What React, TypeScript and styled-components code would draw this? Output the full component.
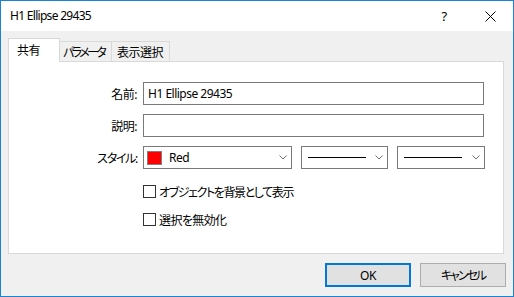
import React from 'react';
import styled, { createGlobalStyle } from 'styled-components';

const GlobalStyle = createGlobalStyle`
  html, body {
    margin: 0;
    padding: 0;
    background: #ffffff;
  }
  * {
    box-sizing: border-box;
  }
`;

const Window = styled.div`
  width: 514px;
  height: 297px;
  border: 1px solid #1883d7;
  background: #f0f0f0;
  display: flex;
  flex-direction: column;
  font-family: 'Noto Sans', 'Noto Sans CJK JP', sans-serif;
  font-size: 12px;
  letter-spacing: -0.5px;
  color: #000000;
  font-feature-settings: 'palt';
`;

// kana in the reference font is much narrower than in Noto Sans CJK
const Squeeze = styled.span<{ $ls: number }>`
  letter-spacing: ${({ $ls }) => $ls}px;
  white-space: nowrap;
`;

const TitleBar = styled.div`
  height: 30px;
  background: #ffffff;
  display: flex;
  align-items: center;
  padding-left: 9px;
`;

const Title = styled.span`
  font-size: 12px;
  line-height: 16px;
  letter-spacing: -0.7px;
`;

const TitleButtons = styled.div`
  margin-left: auto;
  display: flex;
  height: 100%;
`;

const TitleButton = styled.div`
  width: 46px;
  height: 100%;
  display: flex;
  align-items: center;
  justify-content: center;
  font-size: 13px;
`;

const Body = styled.div`
  flex: 1;
  display: flex;
  flex-direction: column;
  padding: 7px 9px 9px 7px;
`;

const TabStrip = styled.div`
  height: 24px;
  margin-bottom: -1px;
  display: flex;
  align-items: flex-end;
  position: relative;
  z-index: 1;
`;

const Tab = styled.div<{ $active?: boolean; $width: number; $pad: number }>`
  width: ${({ $width }) => $width}px;
  height: ${({ $active }) => ($active ? 24 : 21)}px;
  padding-left: ${({ $pad }) => $pad}px;
  margin-left: -1px;
  border: 1px solid #d9d9d9;
  border-bottom: ${({ $active }) => ($active ? 'none' : '1px solid #d9d9d9')};
  background: ${({ $active }) => ($active ? '#ffffff' : '#f0f0f0')};
  display: flex;
  align-items: center;
  white-space: nowrap;
  overflow: hidden;
  position: relative;
  z-index: ${({ $active }) => ($active ? 2 : 1)};
  padding-bottom: ${({ $active }) => ($active ? 1 : 0)}px;

  &:first-child {
    margin-left: 0;
  }
`;

const Panel = styled.div`
  height: 193px;
  background: #ffffff;
  border: 1px solid #d9d9d9;
  padding-top: 20px;
`;

const FormGrid = styled.div`
  display: grid;
  grid-template-columns: 128px 342px;
  column-gap: 6px;
  row-gap: 9px;
  align-items: center;
`;

const Label = styled.label`
  text-align: right;
  white-space: nowrap;
`;

const TextInput = styled.div`
  width: 341px;
  height: 23px;
  border: 1px solid #7a7a7a;
  background: #ffffff;
  display: flex;
  align-items: center;
  padding-left: 4px;
`;

const StyleRow = styled.div`
  display: flex;
  gap: 9px;
`;

const Combo = styled.div<{ $width: number }>`
  width: ${({ $width }) => $width}px;
  height: 23px;
  border: 1px solid #7a7a7a;
  background: #ffffff;
  display: flex;
  align-items: center;
  padding: 0 4px 0 3px;
`;

const Swatch = styled.span<{ $color: string }>`
  width: 15px;
  height: 14px;
  background: ${({ $color }) => $color};
  border: 1px solid #808080;
  margin-right: 7px;
`;

const LineSample = styled.span`
  width: 58px;
  height: 1px;
  background: #000000;
  margin-left: 3px;
`;

const Chevron = styled.svg`
  margin-left: auto;
  flex: none;
`;

const CheckList = styled.div`
  grid-column: 2;
  display: flex;
  flex-direction: column;
  gap: 11px;
  margin-top: 5px;
`;

const CheckRow = styled.div`
  height: 17px;
  display: flex;
  align-items: center;
  gap: 3px;
  white-space: nowrap;
`;

const CheckBox = styled.span`
  width: 13px;
  height: 13px;
  border: 1px solid #333333;
  background: #ffffff;
`;

const ButtonRow = styled.div`
  margin-top: 9px;
  margin-right: -2px;
  display: flex;
  justify-content: flex-end;
  gap: 9px;
`;

const Button = styled.div<{ $default?: boolean }>`
  width: 86px;
  height: 24px;
  background: #e1e1e1;
  border: ${({ $default }) => ($default ? '2px solid #0078d7' : '1px solid #adadad')};
  display: flex;
  align-items: center;
  justify-content: center;
`;

const ChevronIcon = () => (
  <Chevron width="8" height="5" viewBox="0 0 8 5">
    <path d="M0.5 0.5 L4 4 L7.5 0.5" fill="none" stroke="#707070" strokeWidth="1" />
  </Chevron>
);

export default function App() {
  return (
    <>
      <GlobalStyle />
      <Window>
        <TitleBar>
          <Title>H1 Ellipse 29435</Title>
          <TitleButtons>
            <TitleButton>?</TitleButton>
            <TitleButton>
              <svg width="11" height="11" viewBox="0 0 11 11">
                <path d="M0.5 0.5 L10.5 10.5 M10.5 0.5 L0.5 10.5" stroke="#000" strokeWidth="1" />
              </svg>
            </TitleButton>
          </TitleButtons>
        </TitleBar>
        <Body>
          <TabStrip>
            <Tab $active $width={52} $pad={8}>共有</Tab>
            <Tab $width={53} $pad={3}>
              <Squeeze $ls={-2.6}>パラメータ</Squeeze>
            </Tab>
            <Tab $width={59} $pad={5}>表示選択</Tab>
          </TabStrip>
          <Panel>
            <FormGrid>
              <Label>名前:</Label>
              <TextInput>H1 Ellipse 29435</TextInput>
              <Label>説明:</Label>
              <TextInput />
              <Label>
                <Squeeze $ls={-1.3}>スタイル:</Squeeze>
              </Label>
              <StyleRow>
                <Combo $width={149}>
                  <Swatch $color="#ff0000" />
                  Red
                  <ChevronIcon />
                </Combo>
                <Combo $width={88}>
                  <LineSample />
                  <ChevronIcon />
                </Combo>
                <Combo $width={88}>
                  <LineSample />
                  <ChevronIcon />
                </Combo>
              </StyleRow>
              <CheckList>
                <CheckRow>
                  <CheckBox />
                  <Squeeze $ls={-1.4}>オブジェクトを背景として表示</Squeeze>
                </CheckRow>
                <CheckRow>
                  <CheckBox />
                  <Squeeze $ls={-0.6}>選択を無効化</Squeeze>
                </CheckRow>
              </CheckList>
            </FormGrid>
          </Panel>
          <ButtonRow>
            <Button $default>OK</Button>
            <Button>
              <Squeeze $ls={-2}>キャンセル</Squeeze>
            </Button>
          </ButtonRow>
        </Body>
      </Window>
    </>
  );
}
